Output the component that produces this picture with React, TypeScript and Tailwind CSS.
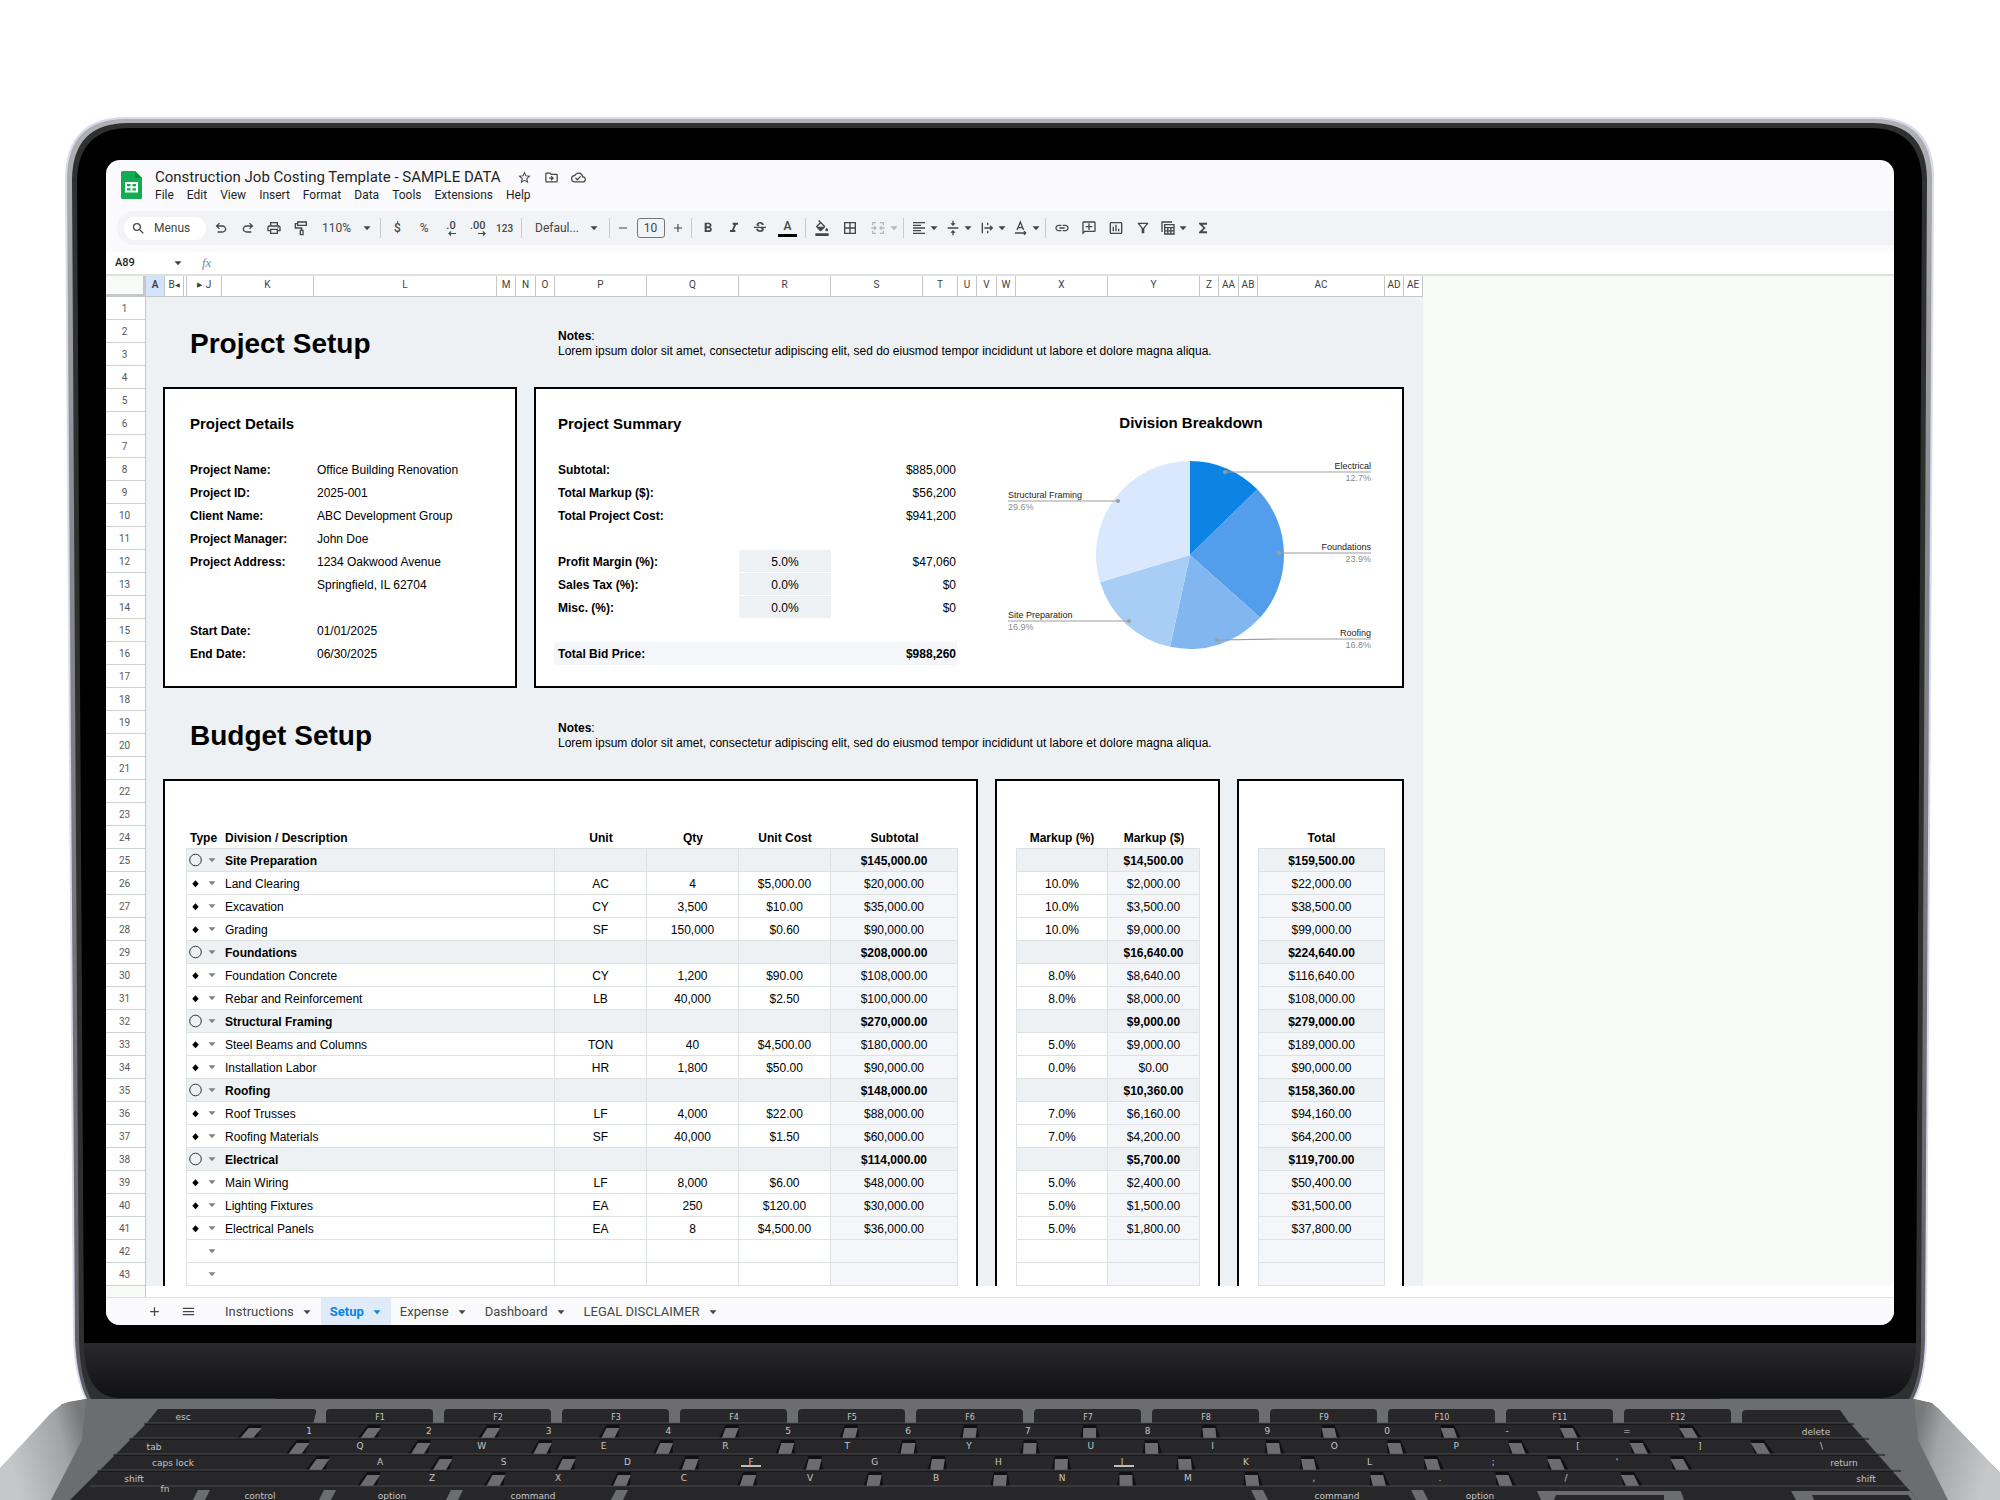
import type { ReactNode } from "react";
import {
  MdAdd,
  MdBorderAll,
  MdFormatAlignLeft,
  MdFormatBold,
  MdFormatColorFill,
  MdFormatItalic,
  MdFunctions,
  MdInsertChartOutlined,
  MdLink,
  MdMenu,
  MdOutlineAddComment,
  MdOutlineCloudDone,
  MdOutlineDriveFileMove,
  MdOutlineFilterAlt,
  MdOutlinePrint,
  MdRemove,
  MdSearch,
  MdStarBorder,
  MdStrikethroughS,
  MdVerticalAlignCenter,
} from "react-icons/md";

const UNDO_PATH =
  "M7 19v-2h7.1q1.575 0 2.738-1T18 13.5 16.838 11 14.1 10H7.8l2.6 2.6L9 14 4 9l5-5 1.4 1.4L7.8 8h6.3q2.425 0 4.163 1.575T20 13.5t-1.737 3.925T14.1 19z";

const menus = ["File", "Edit", "View", "Insert", "Format", "Data", "Tools", "Extensions", "Help"];

const columns = [
  { name: "A", width: "w-[19px]", active: true },
  { name: "B", width: "w-[19px]", collapse: "left" },
  { name: "", width: "w-[3px]" },
  { name: "J", width: "w-[35px]", collapse: "right" },
  { name: "K", width: "w-[92px]" },
  { name: "L", width: "w-[183px]" },
  { name: "M", width: "w-[19px]" },
  { name: "N", width: "w-[20px]" },
  { name: "O", width: "w-[19px]" },
  { name: "P", width: "w-[92px]" },
  { name: "Q", width: "w-[92px]" },
  { name: "R", width: "w-[92px]" },
  { name: "S", width: "w-[92px]" },
  { name: "T", width: "w-[35px]" },
  { name: "U", width: "w-[19px]" },
  { name: "V", width: "w-[20px]" },
  { name: "W", width: "w-[19px]" },
  { name: "X", width: "w-[92px]" },
  { name: "Y", width: "w-[92px]" },
  { name: "Z", width: "w-[19px]" },
  { name: "AA", width: "w-[20px]" },
  { name: "AB", width: "w-[19px]" },
  { name: "AC", width: "w-[127px]" },
  { name: "AD", width: "w-[19px]" },
  { name: "AE", width: "w-[19px]" },
];

const rowNumbers = Array.from({ length: 43 }, (_, i) => i + 1);

const details = [
  ["Project Name:", "Office Building Renovation"],
  ["Project ID:", "2025-001"],
  ["Client Name:", "ABC Development Group"],
  ["Project Manager:", "John Doe"],
  ["Project Address:", "1234 Oakwood Avenue"],
  ["", "Springfield, IL 62704"],
  ["", ""],
  ["Start Date:", "01/01/2025"],
  ["End Date:", "06/30/2025"],
];

const summary = [
  ["Subtotal:", "", "$885,000"],
  ["Total Markup ($):", "", "$56,200"],
  ["Total Project Cost:", "", "$941,200"],
  ["", "", ""],
  ["Profit Margin (%):", "5.0%", "$47,060"],
  ["Sales Tax (%):", "0.0%", "$0"],
  ["Misc. (%):", "0.0%", "$0"],
  ["", "", ""],
];

type BudgetRow = {
  kind: "division" | "item" | "empty";
  name: string;
  unit?: string;
  qty?: string;
  cost?: string;
  subtotal?: string;
  pct?: string;
  markup?: string;
  total?: string;
};

const division = (name: string, subtotal: string, markup: string, total: string): BudgetRow => ({
  kind: "division", name, subtotal, markup, total,
});

const item = (
  name: string, unit: string, qty: string, cost: string,
  subtotal: string, pct: string, markup: string, total: string
): BudgetRow => ({ kind: "item", name, unit, qty, cost, subtotal, pct, markup, total });

const budget: BudgetRow[] = [
  division("Site Preparation", "$145,000.00", "$14,500.00", "$159,500.00"),
  item("Land Clearing", "AC", "4", "$5,000.00", "$20,000.00", "10.0%", "$2,000.00", "$22,000.00"),
  item("Excavation", "CY", "3,500", "$10.00", "$35,000.00", "10.0%", "$3,500.00", "$38,500.00"),
  item("Grading", "SF", "150,000", "$0.60", "$90,000.00", "10.0%", "$9,000.00", "$99,000.00"),
  division("Foundations", "$208,000.00", "$16,640.00", "$224,640.00"),
  item("Foundation Concrete", "CY", "1,200", "$90.00", "$108,000.00", "8.0%", "$8,640.00", "$116,640.00"),
  item("Rebar and Reinforcement", "LB", "40,000", "$2.50", "$100,000.00", "8.0%", "$8,000.00", "$108,000.00"),
  division("Structural Framing", "$270,000.00", "$9,000.00", "$279,000.00"),
  item("Steel Beams and Columns", "TON", "40", "$4,500.00", "$180,000.00", "5.0%", "$9,000.00", "$189,000.00"),
  item("Installation Labor", "HR", "1,800", "$50.00", "$90,000.00", "0.0%", "$0.00", "$90,000.00"),
  division("Roofing", "$148,000.00", "$10,360.00", "$158,360.00"),
  item("Roof Trusses", "LF", "4,000", "$22.00", "$88,000.00", "7.0%", "$6,160.00", "$94,160.00"),
  item("Roofing Materials", "SF", "40,000", "$1.50", "$60,000.00", "7.0%", "$4,200.00", "$64,200.00"),
  division("Electrical", "$114,000.00", "$5,700.00", "$119,700.00"),
  item("Main Wiring", "LF", "8,000", "$6.00", "$48,000.00", "5.0%", "$2,400.00", "$50,400.00"),
  item("Lighting Fixtures", "EA", "250", "$120.00", "$30,000.00", "5.0%", "$1,500.00", "$31,500.00"),
  item("Electrical Panels", "EA", "8", "$4,500.00", "$36,000.00", "5.0%", "$1,800.00", "$37,800.00"),
  { kind: "empty", name: "" },
  { kind: "empty", name: "" },
];

const slices = [
  { share: 12.7, color: "#0b84e6" },
  { share: 23.9, color: "#529eec" },
  { share: 16.8, color: "#81b6f0" },
  { share: 16.9, color: "#a9cef6" },
  { share: 29.7, color: "#d9e8fd" },
];

const callouts = [
  { name: "Electrical", pct: "12.7%", line: "268,83 414,83", y: 83, side: "right" },
  { name: "Foundations", pct: "23.9%", line: "322,164 414,164", y: 164, side: "right" },
  { name: "Roofing", pct: "16.8%", line: "260,251 320,250 414,250", y: 250, side: "right" },
  { name: "Site Preparation", pct: "16.9%", line: "172,232 51,232", y: 232, side: "left" },
  { name: "Structural Framing", pct: "29.6%", line: "161,112 51,112", y: 112, side: "left" },
];

const tabs = ["Instructions", "Setup", "Expense", "Dashboard", "LEGAL DISCLAIMER"];

// Keyboard rows, seen in perspective. `gap` is the first gap between keys, `step` the distance to the next.
const keyRows = [
  { y: 1424, h: 14, gap: 251, step: 119.8, count: 13, labels: ["1", "2", "3", "4", "5", "6", "7", "8", "9", "0", "-", "="], first: 309 },
  { y: 1439, h: 15, gap: 299, step: 121.8, count: 13, labels: ["Q", "W", "E", "R", "T", "Y", "U", "I", "O", "P", "[", "]", "\\"], first: 360 },
  { y: 1455, h: 15, gap: 319, step: 123.7, count: 12, labels: ["A", "S", "D", "F", "G", "H", "J", "K", "L", ";", "'"], first: 380 },
  { y: 1471, h: 15, gap: 370, step: 126, count: 11, labels: ["Z", "X", "C", "V", "B", "N", "M", ",", ".", "/"], first: 432 },
];

function Caret({ className = "text-[#444746]" }: { className?: string }) {
  return (
    <svg viewBox="0 0 12 12" className={`h-3 w-3 shrink-0 ${className}`} aria-hidden="true">
      <path d="M2.500 4.200h7L6 8.200z" fill="currentColor" />
    </svg>
  );
}

function Tool({ label, children }: { label: string; children: ReactNode }) {
  return (
    <button type="button" aria-label={label} className="flex h-6 items-center justify-center text-[16px] text-[#444746]">
      {children}
    </button>
  );
}

function Separator() {
  return <div className="mx-[3px] h-[20px] w-px shrink-0 bg-[#c7cacc]" />;
}

function Decimal({ text, flip }: { text: string; flip?: boolean }) {
  return (
    <span className="flex flex-col items-center text-[11px] leading-[10px] font-medium">
      {text}
      <svg viewBox="0 0 8 5" className={flip ? "h-[5px] w-2 self-end" : "h-[5px] w-2 -scale-x-100 self-end"}>
        <path d="M0 2.500h7M5 .5l2 2-2 2" fill="none" stroke="currentColor" strokeWidth="1.200" />
      </svg>
    </span>
  );
}

function DocHeader() {
  return (
    <header className="flex gap-[13px] pt-[7px] pb-[7px] pl-[15px]">
      <svg viewBox="0 0 21 28" className="mt-1 h-7 w-[21px]" aria-hidden="true">
        <path d="M1.500 0H14l7 7v19.500a1.500 1.500 0 0 1-1.500 1.500h-18A1.500 1.500 0 0 1 0 26.500v-25A1.500 1.500 0 0 1 1.500 0z" fill="#14ab52" />
        <path d="M14 0l7 7h-7z" fill="#0c8f42" />
        <path d="M4 11h13v10.500H4zM6 13v2.300h3.600V13zm5.500 0v2.300H15V13zM6 17.200v2.300h3.600v-2.300zm5.500 0v2.300H15v-2.300z" fill="#fff" fillRule="evenodd" />
      </svg>
      <div>
        <div className="flex h-5 items-center">
          <h1 className="text-[15px] leading-5 text-[#1f1f1f]">Construction Job Costing Template - SAMPLE DATA</h1>
          <div className="ml-4 flex gap-3 text-[15px] text-[#444746]">
            <button type="button" aria-label="Star"><MdStarBorder /></button>
            <button type="button" aria-label="Move"><MdOutlineDriveFileMove /></button>
            <button type="button" aria-label="See document status"><MdOutlineCloudDone /></button>
          </div>
        </div>
        <nav className="flex h-[17px] gap-[13px] text-[12px] leading-[17px] text-[#1f1f1f]">
          {menus.map((m) => (
            <button key={m} type="button">{m}</button>
          ))}
        </nav>
      </div>
    </header>
  );
}

function Toolbar() {
  return (
    <div className="ml-[11px] flex h-[34px] items-center rounded-l-full bg-[#f1f3f6] pl-[7px] text-[12px] text-[#444746]">
      <button type="button" className="mr-[2px] flex h-[23px] w-[82px] shrink-0 items-center gap-2 rounded-full bg-white pl-[7px]">
        <MdSearch className="text-[15px]" />
        Menus
      </button>
      <div className="flex w-[106px] shrink-0 justify-around">
        <Tool label="Undo"><svg viewBox="0 0 24 24" className="h-4 w-4"><path d={UNDO_PATH} fill="currentColor" /></svg></Tool>
        <Tool label="Redo"><svg viewBox="0 0 24 24" className="h-4 w-4 -scale-x-100"><path d={UNDO_PATH} fill="currentColor" /></svg></Tool>
        <Tool label="Print"><MdOutlinePrint /></Tool>
        <Tool label="Paint format">
          <svg viewBox="0 0 24 24" className="h-4 w-4" fill="none" stroke="currentColor" strokeWidth="2">
            <path d="M7 3h13v5H7zM7 5.500H3.500V12H13v3.500M11 15.500h4V22h-4z" />
          </svg>
        </Tool>
      </div>
      <button type="button" className="flex w-[63px] shrink-0 items-center justify-between pr-1 pl-2">
        110%
        <Caret />
      </button>
      <Separator />
      <div className="flex w-[134px] shrink-0 items-center justify-around">
        <button type="button" className="w-6 font-medium">$</button>
        <button type="button" className="w-6">%</button>
        <button type="button" aria-label="Decrease decimal places" className="flex w-6 justify-center"><Decimal text=".0" /></button>
        <button type="button" aria-label="Increase decimal places" className="flex w-6 justify-center"><Decimal text=".00" flip /></button>
        <button type="button" className="w-6 text-[10px] font-medium">123</button>
      </div>
      <Separator />
      <button type="button" className="flex w-[81px] shrink-0 items-center justify-between pr-[6px] pl-[10px]">
        Defaul...
        <Caret />
      </button>
      <Separator />
      <div className="flex w-[75px] shrink-0 items-center justify-between">
        <Tool label="Decrease font size"><MdRemove className="w-5 text-[14px]" /></Tool>
        <input aria-label="Font size" defaultValue="10" className="h-5 w-[28px] rounded-[3px] border border-[#747775] text-center text-[12px]" />
        <Tool label="Increase font size"><MdAdd className="w-5 text-[14px]" /></Tool>
      </div>
      <Separator />
      <div className="flex w-[107px] shrink-0 items-center justify-around">
        <Tool label="Bold"><MdFormatBold /></Tool>
        <Tool label="Italic"><MdFormatItalic /></Tool>
        <Tool label="Strikethrough"><MdStrikethroughS /></Tool>
        <button type="button" aria-label="Text color" className="flex w-[19px] flex-col items-center">
          <span className="text-[12px] leading-[15px] font-medium">A</span>
          <span className="h-[3px] w-full bg-black" />
        </button>
      </div>
      <Separator />
      <div className="flex w-[26px] shrink-0 justify-center"><Tool label="Fill color"><MdFormatColorFill /></Tool></div>
      <div className="flex w-[30px] shrink-0 justify-center"><Tool label="Borders"><MdBorderAll /></Tool></div>
      <button type="button" aria-label="Merge cells" className="flex w-[35px] shrink-0 items-center justify-end gap-[2px] text-[#b4b7b9]">
        <svg viewBox="0 0 24 24" className="h-4 w-4" fill="none" stroke="currentColor" strokeWidth="2">
          <path d="M9 4H4v4M15 4h5v4M9 20H4v-4M15 20h5v-4M2 12h7M22 12h-7M6.500 9.500L9 12l-2.500 2.500M17.500 9.500L15 12l2.500 2.500" />
        </svg>
        <Caret className="text-[#b4b7b9]" />
      </button>
      <Separator />
      <div className="flex shrink-0 gap-1 pl-[3px]">
        <Tool label="Horizontal align"><MdFormatAlignLeft className="w-[18px]" /><Caret /></Tool>
        <Tool label="Vertical align"><MdVerticalAlignCenter className="w-[18px]" /><Caret /></Tool>
        <Tool label="Text wrapping">
          <svg viewBox="0 0 24 24" className="h-4 w-[18px]" fill="none" stroke="currentColor" strokeWidth="2">
            <path d="M5 4v16M13 4v4M13 16v4M8 12h12M16.500 8.500L20 12l-3.500 3.500" />
          </svg>
          <Caret />
        </Tool>
        <Tool label="Text rotation">
          <svg viewBox="0 0 24 24" className="h-4 w-[18px]" fill="none" stroke="currentColor" strokeWidth="2">
            <path d="M6 15l5-12 5 12M7.500 11.500h7M3 19.500h16M16.500 17l2.500 2.500-2.500 2.500" />
          </svg>
          <Caret />
        </Tool>
      </div>
      <Separator />
      <div className="flex w-[107px] shrink-0 justify-around">
        <Tool label="Insert link"><MdLink /></Tool>
        <Tool label="Insert comment"><MdOutlineAddComment className="-scale-x-100" /></Tool>
        <Tool label="Insert chart"><MdInsertChartOutlined /></Tool>
        <Tool label="Create a filter"><MdOutlineFilterAlt /></Tool>
      </div>
      <div className="flex shrink-0 gap-[6px] pl-[3px]">
        <Tool label="Filter views">
          <svg viewBox="0 0 24 24" className="h-4 w-[18px]" fill="none" stroke="currentColor" strokeWidth="2">
            <path d="M3 18V3h15M7 7h14v14H7zM7 11.500h14M11.700 11.500V21M16.300 11.500V21M7 16.300h14" />
          </svg>
          <Caret />
        </Tool>
        <Tool label="Functions"><MdFunctions /></Tool>
      </div>
    </div>
  );
}

function FormulaBar() {
  return (
    <div className="mt-[7px] flex h-[22px] items-center bg-white text-[11px] text-[#1f1f1f]">
      <input aria-label="Name box" defaultValue="A89" className="w-[66px] pl-[9px] font-medium" />
      <Caret />
      <span className="ml-[18px] w-5 font-['Liberation_Serif',serif] text-[13px] text-[#80868b] italic">fx</span>
      <input aria-label="Formula" className="flex-1" />
    </div>
  );
}

function ColumnHeader() {
  return (
    <div className="flex h-[23px] border-t-2 border-[#dde2e0] bg-[#f8faf8] text-[10px] leading-[18px] text-[#3c4043]">
      <div className="w-[40px] shrink-0 border-r-[3px] border-b-[3px] border-[#c4c8c7]" />
      {columns.map((c, i) => (
        <div
          key={i}
          className={`flex shrink-0 items-start justify-center border-r border-b border-[#c4c9c8] ${c.width} ${c.active ? "bg-[#d3e3fd] font-semibold" : "bg-white"}`}
        >
          {c.collapse === "right" && <span className="mr-1 text-[7px]">▶</span>}
          {c.name}
          {c.collapse === "left" && <span className="text-[6px]">◀</span>}
        </div>
      ))}
    </div>
  );
}

function SectionTitle({ title }: { title: string }) {
  return (
    <div className="flex h-[90px] items-center pt-[3px] pl-[44px]">
      <h2 className="w-[368px] text-[28px] leading-8 font-bold">{title}</h2>
      <p className="leading-[15px]">
        <b>Notes</b>:<br />
        Lorem ipsum dolor sit amet, consectetur adipiscing elit, sed do eiusmod tempor incididunt ut labore et dolore magna aliqua.
      </p>
    </div>
  );
}

function ProjectDetails() {
  return (
    <section className="w-[354px] border-2 border-black bg-white pt-[23px] pl-[25px]">
      <h3 className="mb-[23px] h-[23px] text-[15px] leading-[23px] font-bold">Project Details</h3>
      <dl>
        {details.map(([label, value], i) => (
          <div key={i} className="flex h-[23px] leading-[25px]">
            <dt className="w-[127px] font-bold">{label}</dt>
            <dd>{value}</dd>
          </div>
        ))}
      </dl>
    </section>
  );
}

function DivisionChart() {
  const cx = 233;
  const cy = 166;
  const r = 94;
  let sum = 0;
  const point = (share: number) => {
    const a = (share / 100) * Math.PI * 2;
    return `${(cx + r * Math.sin(a)).toFixed(2)} ${(cy - r * Math.cos(a)).toFixed(2)}`;
  };

  return (
    <svg viewBox="0 0 445 297" className="h-[297px] w-[445px]" role="img" aria-label="Division Breakdown">
      <text x="234" y="39" textAnchor="middle" fontSize="15" fontWeight="700">Division Breakdown</text>
      {slices.map((s) => {
        const from = point(sum);
        sum += s.share;
        return <path key={s.color} d={`M${cx} ${cy}L${from}A${r} ${r} 0 0 1 ${point(sum)}z`} fill={s.color} />;
      })}
      {callouts.map((c) => {
        const [dotX, dotY] = c.line.split(" ")[0].split(",");
        const x = c.side === "right" ? 414 : 51;
        const anchor = c.side === "right" ? "end" : "start";
        return (
          <g key={c.name} fontSize="9" textAnchor={anchor}>
            <polyline points={c.line} fill="none" stroke="#9e9e9e" strokeWidth="1.200" />
            <circle cx={dotX} cy={dotY} r="2" fill="#9e9e9e" />
            <text x={x} y={c.y - 3} fill="#222">{c.name}</text>
            <text x={x} y={c.y + 9} fill="#8c8c8c">{c.pct}</text>
          </g>
        );
      })}
    </svg>
  );
}

function ProjectSummary() {
  return (
    <section className="flex w-[870px] border-2 border-black bg-white pl-[18px]">
      <div className="w-[403px] pt-[23px]">
        <h3 className="mb-[23px] h-[23px] pl-1 text-[15px] leading-[23px] font-bold">Project Summary</h3>
        {summary.map(([label, pct, amount], i) => (
          <div key={i} className="flex h-[23px] leading-[25px]">
            <div className="w-[185px] pl-1 font-bold">{label}</div>
            <div className={pct ? "w-[92px] border-b border-white bg-[#edf1f3] text-center" : "w-[92px]"}>{pct}</div>
            <div className="flex-1 pr-px text-right">{amount}</div>
          </div>
        ))}
        <div className="flex h-[23px] justify-between bg-[#f5f6f9] pr-px pl-1 leading-[25px] font-bold">
          <span>Total Bid Price:</span>
          <span>$988,260</span>
        </div>
      </div>
      <DivisionChart />
    </section>
  );
}

const headCell = "h-[23px] border-b border-[#dce1e1] p-0 pt-[2px] font-bold";
const cell = "h-[23px] border-r border-b border-[#dce1e1] p-0 pt-[2px]";

function rowClass(row: BudgetRow) {
  return row.kind === "division" ? "bg-[#edf1f3] font-bold" : "";
}

function calcClass(row: BudgetRow) {
  return row.kind === "division" ? cell : `${cell} bg-[#f5f6f9]`;
}

function BudgetTables() {
  return (
    <div className="flex h-[508px] pl-[17px] leading-[20px]">
      <section className="w-[815px] border-2 border-b-0 border-black bg-white pt-[45px] pl-[21px]">
        <table className="w-[772px] table-fixed border-separate border-spacing-0 text-center">
          <thead>
            <tr>
              <th className={`${headCell} w-[36px] pl-1 text-left`}>Type</th>
              <th className={`${headCell} w-[333px] pl-[3px] text-left`}>Division / Description</th>
              <th className={`${headCell} w-[92px]`}>Unit</th>
              <th className={`${headCell} w-[92px]`}>Qty</th>
              <th className={`${headCell} w-[92px]`}>Unit Cost</th>
              <th className={headCell}>Subtotal</th>
            </tr>
          </thead>
          <tbody>
            {budget.map((row, i) => (
              <tr key={i} className={rowClass(row)}>
                <td className="h-[23px] border-b border-l border-[#dce1e1] p-0">
                  <div className="flex items-center justify-between pr-1 pl-[2px]">
                    <svg viewBox="0 0 14 14" className="h-[14px] w-[14px]" aria-hidden="true">
                      {row.kind === "division" && <circle cx="6.500" cy="7" r="5.800" fill="none" stroke="#333" />}
                      {row.kind === "item" && <path d="M6.500 4.300l3.200 3.500-3.200 3.500-3.200-3.500z" fill="#000" />}
                    </svg>
                    <button type="button" aria-label="Row type" className="flex">
                      <Caret className="text-[#808386]" />
                    </button>
                  </div>
                </td>
                <td className={`${cell} pl-[3px] text-left`}>{row.name}</td>
                <td className={cell}>{row.unit}</td>
                <td className={cell}>{row.qty}</td>
                <td className={cell}>{row.cost}</td>
                <td className={calcClass(row)}>{row.subtotal}</td>
              </tr>
            ))}
          </tbody>
        </table>
      </section>
      <section className="ml-[17px] w-[225px] border-2 border-b-0 border-black bg-white pt-[45px] pl-[19px]">
        <table className="w-[184px] table-fixed border-separate border-spacing-0 text-center">
          <thead>
            <tr>
              <th className={headCell}>Markup (%)</th>
              <th className={headCell}>Markup ($)</th>
            </tr>
          </thead>
          <tbody>
            {budget.map((row, i) => (
              <tr key={i} className={rowClass(row)}>
                <td className={`${cell} border-l`}>{row.pct}</td>
                <td className={calcClass(row)}>{row.markup}</td>
              </tr>
            ))}
          </tbody>
        </table>
      </section>
      <section className="ml-[17px] w-[167px] border-2 border-b-0 border-black bg-white pt-[45px] pl-[19px]">
        <table className="w-[127px] table-fixed border-separate border-spacing-0 text-center">
          <thead>
            <tr>
              <th className={headCell}>Total</th>
            </tr>
          </thead>
          <tbody>
            {budget.map((row, i) => (
              <tr key={i} className={rowClass(row)}>
                <td className={`${calcClass(row)} border-l`}>{row.total}</td>
              </tr>
            ))}
          </tbody>
        </table>
      </section>
    </div>
  );
}

function SheetTabs() {
  return (
    <footer className="flex h-[28px] items-center border-t border-[#dfe1e5] bg-[#fafafd] pl-[41px] text-[13px] text-[#444746]">
      <button type="button" aria-label="Add sheet" className="text-[15px]"><MdAdd /></button>
      <button type="button" aria-label="All sheets" className="mr-[20px] ml-[19px] text-[15px]"><MdMenu /></button>
      {tabs.map((t) => (
        <button
          key={t}
          type="button"
          className={`flex h-full items-center gap-[7px] pt-px pr-2 pl-[9px] ${t === "Setup" ? "bg-[#dfebf8] font-bold text-[#0b84e6]" : ""}`}
        >
          {t}
          <Caret className={t === "Setup" ? "text-[#0b84e6]" : "text-[#444746]"} />
        </button>
      ))}
    </footer>
  );
}

function Laptop() {
  return (
    <svg viewBox="0 0 2000 1500" className="w-full [grid-area:1/1]" aria-hidden="true">
      <defs>
        <linearGradient id="hinge" x1="0" y1="0" x2="0" y2="1">
          <stop offset="0" stopColor="#29292b" />
          <stop offset="1" stopColor="#111113" />
        </linearGradient>
        <linearGradient id="rim" x1="0" y1="0" x2="0" y2="1">
          <stop offset="0" stopColor="#b0b1b3" />
          <stop offset="0.300" stopColor="#8b8c8f" />
          <stop offset="1" stopColor="#5d5e61" />
        </linearGradient>
        <linearGradient id="edgeL" gradientUnits="userSpaceOnUse" x1="10" y1="1460" x2="86" y2="1440">
          <stop offset="0" stopColor="#c6c7c9" />
          <stop offset="0.700" stopColor="#a2a3a5" />
          <stop offset="1" stopColor="#77787a" />
        </linearGradient>
        <linearGradient id="edgeR" gradientUnits="userSpaceOnUse" x1="1990" y1="1460" x2="1914" y2="1440">
          <stop offset="0" stopColor="#c6c7c9" />
          <stop offset="0.700" stopColor="#a2a3a5" />
          <stop offset="1" stopColor="#77787a" />
        </linearGradient>
      </defs>

      {/* Lid */}
      <path d="M65 178Q66 117 126 117H1874Q1934 117 1934 178L1927 1340Q1926 1380 1914 1401H86Q75 1380 73 1340z" fill="#dcd8f0" />
      <path d="M67 178Q68 119 126 119H1874Q1931 119 1932 178L1925 1340Q1924 1380 1912 1401H88Q77 1380 75 1340z" fill="url(#rim)" />
      <path d="M72 179Q73 123 128 123H1872Q1926 123 1927 179L1921 1340Q1921 1380 1908 1401H92Q80 1380 79 1340z" fill="#2f3032" />
      <path d="M77 181Q78 128 130 128H1870Q1921 128 1922 181L1916 1343H84z" fill="#000" />
      <path d="M84 1343H1916Q1916 1398 1880 1398H120Q84 1398 84 1343z" fill="url(#hinge)" />

      {/* Base */}
      <path d="M86 1399H1914L1932 1403 2000 1473V1500H0V1470L62 1404z" fill="#6c6d70" />
      <path d="M86 1399L68 1402Q58 1406 50 1414L0 1468V1500H51L82 1440z" fill="url(#edgeL)" />
      <path d="M1914 1399L1930 1403 1938 1408 2000 1473V1500H1948L1918 1440z" fill="url(#edgeR)" />
      <path d="M276 1397H1720V1399H276z" fill="#19191b" />

      {/* Function row */}
      <path d="M158 1409H313Q317 1409 316 1413L313 1424H146z" fill="#272729" />
      {Array.from({ length: 12 }, (_, i) => {
        const x = 321 + i * 118;
        return <rect key={i} x={x + 5} y="1409" width="107" height="18" rx="4" fill="#272729" />;
      })}
      <path d="M1742 1414Q1742 1410 1746 1410H1840L1850 1424H1742z" fill="#272729" />

      {/* Remaining rows */}
      <path d="M147 1423H1850L1918 1500H70z" fill="#272729" />
      {keyRows.map((row) => (
        <g key={row.y}>
          <path d={`M${144 - (row.y - 1424)} ${row.y}H${1854 + (row.y - 1424)}`} stroke="#0d0d0e" strokeWidth="1" />
          <path d={`M${146 - (row.y - 1424)} ${row.y - 1}H${1852 + (row.y - 1424)}`} stroke="#555558" strokeWidth="0.800" />
          {Array.from({ length: row.count }, (_, i) => {
            const x = row.gap + i * row.step;
            const lean = ((1000 - x) / 1000) * 5;
            return (
              <g key={i}>
                <path d={`M${x - 6 + lean} ${row.y + 1}h13L${x + 10 - lean} ${row.y + row.h}h-20z`} fill="#111112" />
                <path d={`M${x - 6 + lean} ${row.y + 4}h13L${x + 6 - lean} ${row.y + row.h}h-13z`} fill="#6c6d70" />
              </g>
            );
          })}
        </g>
      ))}
      <path d="M90 1486H1908" stroke="#555558" strokeWidth="0.800" />
      {[202, 328, 455, 620, 1255, 1415].map((x) => (
        <path key={x} d={`M${x - 4} 1490h12l${x < 1000 ? -5 : 5} 10h-12z`} fill="#6c6d70" />
      ))}
      <path d="M1537 1491H1910L1918 1500H1541z" fill="#6c6d70" />
      <path d="M1556 1495H1664V1500H1554zM1680 1489H1790L1796 1500H1684zM1812 1495H1908L1912 1500H1814z" fill="#272729" />
      <path d="M741 1466h20M1114 1466h20" stroke="#bdbdbf" strokeWidth="2" />

      {/* Key legends */}
      <g fill="#c4c5c7" fontSize="9" fontFamily="DejaVu Sans, sans-serif" textAnchor="middle">
        <text x="183" y="1420">esc</text>
        {Array.from({ length: 12 }, (_, i) => (
          <text key={i} x={380 + i * 118} y="1420" fontSize="8">{`F${i + 1}`}</text>
        ))}
        {keyRows.map((row) =>
          row.labels.map((label, i) => (
            <text key={label} x={row.first + i * row.step} y={row.y + 10}>{label}</text>
          ))
        )}
        <text x="1816" y="1435">delete</text>
        <text x="154" y="1450">tab</text>
        <text x="173" y="1466">caps lock</text>
        <text x="1844" y="1466">return</text>
        <text x="134" y="1482">shift</text>
        <text x="1866" y="1482">shift</text>
        <text x="165" y="1492">fn</text>
        <text x="260" y="1499">control</text>
        <text x="392" y="1499">option</text>
        <text x="533" y="1499">command</text>
        <text x="1337" y="1499">command</text>
        <text x="1480" y="1499">option</text>
      </g>
    </svg>
  );
}

export default function App() {
  return (
    <div className="grid min-h-screen items-start overflow-hidden bg-white">
      <Laptop />
      <main className="px-[5.3%] pt-[8%] [grid-area:1/1]">
        <div className="overflow-hidden rounded-[14px] bg-[#fafafd] font-['Roboto',sans-serif]">
          <DocHeader />
          <Toolbar />
          <FormulaBar />
          <ColumnHeader />
          <div className="flex bg-[#f8faf7]">
            <div className="w-[40px] shrink-0 border-r border-[#c4c9c8] bg-white pr-[2px] text-center text-[10px] leading-[23px] text-[#55585b]">
              {rowNumbers.map((n) => (
                <div key={n} className="-mr-[2px] h-[23px] border-b border-[#cdd1d0] pr-[2px]">{n}</div>
              ))}
            </div>
            <div className="h-[989px] w-[1277px] shrink-0 overflow-hidden bg-[#edf1f3] font-['Liberation_Sans',Arial,sans-serif] text-[12px] text-black">
              <SectionTitle title="Project Setup" />
              <div className="flex h-[302px] gap-[17px] pb-px pl-[17px]">
                <ProjectDetails />
                <ProjectSummary />
              </div>
              <SectionTitle title="Budget Setup" />
              <BudgetTables />
            </div>
          </div>
          <div className="flex h-[11px] bg-white">
            <div className="w-[40px] border-r border-[#c4c9c8] bg-[#f8faf8]" />
          </div>
          <SheetTabs />
        </div>
      </main>
    </div>
  );
}
